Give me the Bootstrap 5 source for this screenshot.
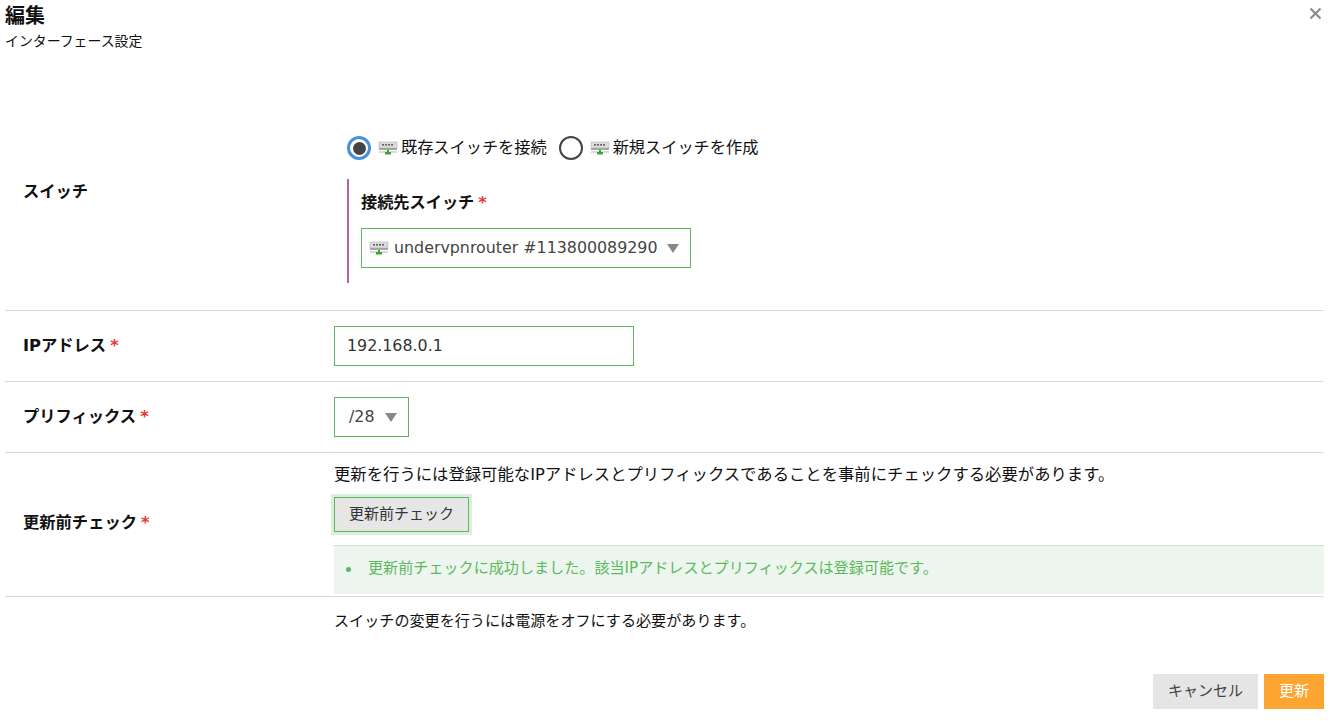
<!DOCTYPE html>
<html lang="ja">
<head>
<meta charset="utf-8">
<title>編集</title>
<link href="https://cdn.jsdelivr.net/npm/bootstrap@5.3.0/dist/css/bootstrap.min.css" rel="stylesheet">
<style>
html,body{height:721px;overflow:hidden}
body{font-family:"DejaVu Sans","Noto Sans CJK JP",sans-serif;font-size:15px;color:#111;background:#fff;line-height:20px}
.sheet{padding:0 8px 0 5px;position:relative;height:721px}
.ttl{font-size:20px;font-weight:700;line-height:24px;padding-top:4px;color:#111}
.sub{font-size:13.9px;line-height:20px;margin-top:3px;margin-bottom:71px;height:20px}
.closer{position:absolute;right:10px;top:7px;width:13px;height:13px}
.frow{display:flex;border-bottom:1px solid #d9d9d9}
.flabel{width:329px;padding-left:18px;font-weight:700;font-size:16.3px;display:flex;align-items:center;flex:none}
.flabel.topped{align-self:flex-start;padding-top:58px;line-height:24px}
.flabel.lifted{padding-bottom:4px}
.fbody{flex:1;min-width:0}
.req{color:#e53935;margin-left:4px;font-weight:700}
.rgroup{display:flex;align-items:center;padding-left:13px;height:24px;margin-top:14px;font-size:16.2px}
.rdot{width:24px;height:24px;border-radius:50%;border:2px solid #444;flex:none;display:flex;align-items:center;justify-content:center;background:#fff}
.rdot.on{border:3px solid #4a90d9}
.rdot.on::after{content:"";width:13px;height:13px;border-radius:50%;background:#444}
.rdot.second{margin-left:12px}
.swi{flex:none;display:block}
.rgroup .swi{margin:0 3px 0 7px}
.subblock{margin:19px 0 27px 13px;border-left:2px solid #b85fa0;padding:13px 0 15px 12px;height:104px}
.sublabel{font-weight:700;font-size:16.2px;line-height:22px;margin-bottom:14px}
.selbox{display:inline-flex;align-items:center;border:1px solid #5cb85c;height:40px;padding:0 11px 0 7px;font-size:15.85px;color:#444;background:#fff}
.selbox.short{padding:0 11px 0 14px}
.selbox.short span{margin-left:10px}
.selbox .swi{margin-right:5px}
.caret{width:0;height:0;border-left:6px solid transparent;border-right:6px solid transparent;border-top:9px solid #888;margin-left:9px;flex:none}
.ipbox{width:300px;height:40px;border:1px solid #5cb85c;padding:0 12px;display:flex;align-items:center;font-size:15.85px;color:#333}
.sp{padding:15px 0}
.note{line-height:20px;padding-top:12px;font-size:16.35px;white-space:nowrap}
.chk{display:block;height:35px;width:135px;margin:12px 0 13px;border:1px solid #5cb85c;box-shadow:0 0 0 3px #dcefdc;background:#e6e6e6;color:#333;font-size:15px;line-height:18px;border-radius:0;padding:0 0 2px}
.okbox{background:#edf6ee;border-top:1px solid #c6e5c7;height:49px;color:#5cb85c;display:flex;align-items:center;padding:0 0 4px 12px;margin-bottom:2px;font-size:15.1px}
.okbox i{width:5px;height:5px;border-radius:50%;background:#5cb85c;margin:3px 17px 0 0;flex:none}
.warn{margin:14px 0 0 329px;font-size:15.1px;line-height:20px}
.foot{position:absolute;right:8px;top:674px;display:flex;gap:6px}
.cbtn{height:35px;border:0;border-radius:0;font-size:15px;padding:0;color:#444;background:#e5e5e5;width:105px}
.obtn{height:35px;border:0;border-radius:0;font-size:15px;padding:0;color:#fff;background:#fca631;width:60px}
</style>
</head>
<body>
<svg width="0" height="0" class="position-absolute"><defs>
<symbol id="swi" viewBox="0 0 20 14">
<rect x="1" y="1" width="18" height="6" fill="#dcdcdc" stroke="#b5b5b5" stroke-width=".6"/>
<g fill="#666"><rect x="4" y="3" width="2" height="1.6"/><rect x="7" y="3" width="2" height="1.6"/><rect x="10" y="3" width="2" height="1.6"/><rect x="13" y="3" width="2" height="1.6"/></g>
<rect x="1" y="7" width="18" height="2" fill="#a5a5a5"/>
<rect x="1" y="10.5" width="18" height="1" fill="#b5b5b5"/>
<rect x="9" y="9" width="2" height="2" fill="#3aa535"/>
<rect x="7" y="11" width="6" height="2.5" fill="#3aa535"/>
</symbol></defs></svg>
<div class="sheet">
  <div class="ttl">編集</div>
  <div class="sub">インターフェース設定</div>
  <svg class="closer" viewBox="0 0 13 13"><path d="M1.5 1.5l10 10M11.5 1.5l-10 10" stroke="#888" stroke-width="2" fill="none"/></svg>

  <div class="frow">
    <div class="flabel topped">スイッチ</div>
    <div class="fbody">
      <div class="rgroup">
        <span class="rdot on"></span><svg class="swi" width="20" height="14"><use href="#swi"/></svg><span>既存スイッチを接続</span>
        <span class="rdot second"></span><svg class="swi" width="20" height="14"><use href="#swi"/></svg><span>新規スイッチを作成</span>
      </div>
      <div class="subblock">
        <div class="sublabel">接続先スイッチ<span class="req">*</span></div>
        <div class="selbox"><svg class="swi" width="20" height="14"><use href="#swi"/></svg><span>undervpnrouter #113800089290</span><span class="caret"></span></div>
      </div>
    </div>
  </div>

  <div class="frow">
    <div class="flabel">IPアドレス<span class="req">*</span></div>
    <div class="fbody sp"><div class="ipbox">192.168.0.1</div></div>
  </div>

  <div class="frow">
    <div class="flabel">プリフィックス<span class="req">*</span></div>
    <div class="fbody sp"><div class="selbox short">/28<span class="caret"></span></div></div>
  </div>

  <div class="frow">
    <div class="flabel lifted">更新前チェック<span class="req">*</span></div>
    <div class="fbody">
      <div class="note">更新を行うには登録可能なIPアドレスとプリフィックスであることを事前にチェックする必要があります。</div>
      <button type="button" class="btn chk">更新前チェック</button>
      <div class="okbox"><i></i>更新前チェックに成功しました。該当IPアドレスとプリフィックスは登録可能です。</div>
    </div>
  </div>

  <div class="warn">スイッチの変更を行うには電源をオフにする必要があります。</div>

  <div class="foot">
    <button type="button" class="btn cbtn">キャンセル</button>
    <button type="button" class="btn obtn">更新</button>
  </div>
</div>
<script src="https://cdn.jsdelivr.net/npm/bootstrap@5.3.0/dist/js/bootstrap.bundle.min.js"></script>
</body>
</html>
